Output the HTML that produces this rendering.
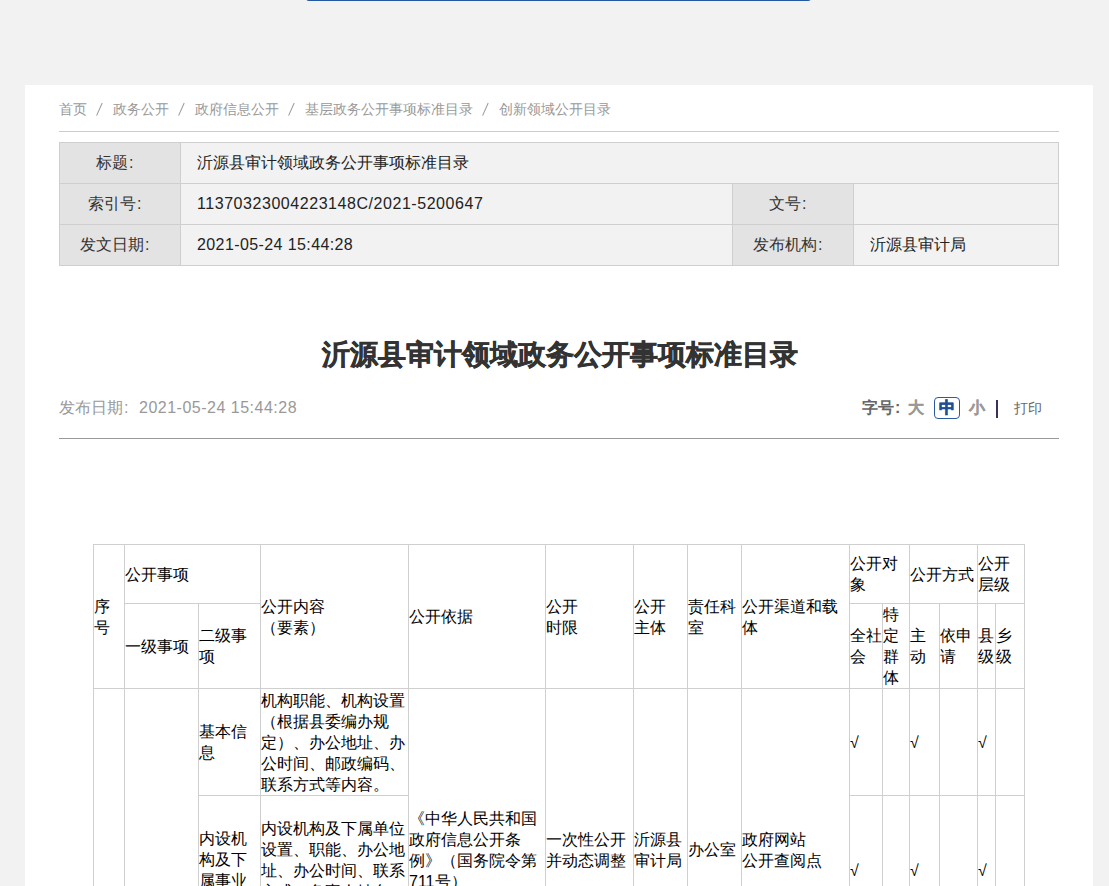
<!DOCTYPE html>
<html><head><meta charset="utf-8">
<style>
html,body{margin:0;padding:0;}
body{width:1109px;height:886px;overflow:hidden;background:#f2f2f2;position:relative;font-family:"Liberation Sans",sans-serif;}
.bar{position:absolute;left:306px;top:-3px;width:505px;height:4px;background:#2458a0;border-radius:0 0 3px 3px;}
.panel{position:absolute;left:25px;top:85px;width:1068px;height:801px;background:#fff;}
.a{position:absolute;white-space:nowrap;}
.sl{position:absolute;top:99px;}
.bc{top:99px;font-size:14px;line-height:20px;color:#999;}
.bc span.s{display:inline-block;width:26px;height:20px;vertical-align:top;}
.bcline{position:absolute;left:59px;top:131px;width:1000px;height:1px;background:#cccccc;}
.info{position:absolute;box-sizing:border-box;border:1px solid #cfcfcf;font-size:16px;color:#333;display:flex;align-items:center;}
.lab{background:#e3e3e3;justify-content:center;}
.val{background:#f2f2f2;padding-left:16px;color:#222;}
.title{left:26px;width:1068px;top:337px;text-align:center;font-size:28px;line-height:36px;font-weight:bold;color:#333;-webkit-text-stroke:0.5px #333;}
.date{left:59px;top:397px;font-size:16px;line-height:22px;color:#999;}
.dline{position:absolute;left:59px;top:438px;width:1000px;height:1px;background:#999999;}
.fs{top:397px;left:862px;font-size:16px;line-height:22px;color:#666;font-weight:bold;}
.fs2{top:397px;font-size:16px;line-height:22px;color:#999;font-weight:bold;-webkit-text-stroke:0.2px #999;}
.fbox{position:absolute;left:934px;top:397px;width:26px;height:22px;box-sizing:border-box;border:1px solid #2b5aa0;border-radius:4px;}
.fs3{left:939px;top:397px;font-size:16px;line-height:22px;color:#1d4f96;font-weight:bold;-webkit-text-stroke:0.6px #1d4f96;}
.pipe{position:absolute;left:996px;top:400px;width:1.5px;height:18px;background:#3d2f5c;}
.pr{left:1014px;top:398px;font-size:14px;line-height:20px;color:#666;}
.cl{display:inline-block;width:1em;padding-left:1px;box-sizing:border-box;text-align:left;}
.num{letter-spacing:0.5px;}
.c{position:absolute;box-sizing:border-box;border:1px solid #cfcfcf;display:flex;align-items:center;background:#fff;}
.c .t{font-size:16px;line-height:21px;color:#000;white-space:nowrap;}
</style></head><body>
<div class="bar"></div>
<div class="panel"></div>
<div class="a bc" style="left:59px">首页</div>
<div class="a bc" style="left:113px">政务公开</div>
<div class="a bc" style="left:195px">政府信息公开</div>
<div class="a bc" style="left:305px">基层政务公开事项标准目录</div>
<div class="a bc" style="left:499px">创新领域公开目录</div>
<svg class="sl" style="left:87px" width="26" height="20"><line x1="9.6" y1="16.6" x2="15.2" y2="4" stroke="#a0a0a0" stroke-width="1.1"/></svg>
<svg class="sl" style="left:169px" width="26" height="20"><line x1="9.6" y1="16.6" x2="15.2" y2="4" stroke="#a0a0a0" stroke-width="1.1"/></svg>
<svg class="sl" style="left:279px" width="26" height="20"><line x1="9.6" y1="16.6" x2="15.2" y2="4" stroke="#a0a0a0" stroke-width="1.1"/></svg>
<svg class="sl" style="left:473px" width="26" height="20"><line x1="9.6" y1="16.6" x2="15.2" y2="4" stroke="#a0a0a0" stroke-width="1.1"/></svg>
<div class="bcline"></div>
<div class="info lab" style="left:59px;top:142px;width:122px;height:42px;">标题<span class="cl">:</span></div>
<div class="info val" style="left:180px;top:142px;width:879px;height:42px;">沂源县审计领域政务公开事项标准目录</div>
<div class="info lab" style="left:59px;top:183px;width:122px;height:42px;">索引号<span class="cl">:</span></div>
<div class="info val" style="left:180px;top:183px;width:553px;height:42px;"><span style="letter-spacing:0.55px">11370323004223148C/2021-5200647</span></div>
<div class="info lab" style="left:732px;top:183px;width:122px;height:42px;">文号<span class="cl">:</span></div>
<div class="info val" style="left:853px;top:183px;width:206px;height:42px;"></div>
<div class="info lab" style="left:59px;top:224px;width:122px;height:42px;">发文日期<span class="cl">:</span></div>
<div class="info val" style="left:180px;top:224px;width:553px;height:42px;"><span style="letter-spacing:0.4px">2021-05-24 15:44:28</span></div>
<div class="info lab" style="left:732px;top:224px;width:122px;height:42px;">发布机构<span class="cl">:</span></div>
<div class="info val" style="left:853px;top:224px;width:206px;height:42px;">沂源县审计局</div>
<div class="a title">沂源县审计领域政务公开事项标准目录</div>
<div class="a date">发布日期<span class="cl">:</span><span style="letter-spacing:0.5px">2021-05-24 15:44:28</span></div>
<div class="a fs">字号<span class="cl">:</span></div>
<div class="a fs2" style="left:908px;">大</div>
<div class="fbox"></div>
<div class="a fs3">中</div>
<div class="a fs2" style="left:969px;">小</div>
<div class="pipe"></div>
<div class="a pr">打印</div>
<div class="dline"></div>
<div class="c" style="left:93px;top:544px;width:32px;height:145px;"><div class="t">序<br>号</div></div>
<div class="c" style="left:124px;top:544px;width:137px;height:60px;"><div class="t">公开事项</div></div>
<div class="c" style="left:124px;top:603px;width:75px;height:86px;"><div class="t">一级事项</div></div>
<div class="c" style="left:198px;top:603px;width:63px;height:86px;"><div class="t">二级事<br>项</div></div>
<div class="c" style="left:260px;top:544px;width:149px;height:145px;"><div class="t">公开内容<br>（要素）</div></div>
<div class="c" style="left:408px;top:544px;width:138px;height:145px;"><div class="t">公开依据</div></div>
<div class="c" style="left:545px;top:544px;width:89px;height:145px;"><div class="t">公开<br>时限</div></div>
<div class="c" style="left:633px;top:544px;width:55px;height:145px;"><div class="t">公开<br>主体</div></div>
<div class="c" style="left:687px;top:544px;width:55px;height:145px;"><div class="t">责任科<br>室</div></div>
<div class="c" style="left:741px;top:544px;width:109px;height:145px;"><div class="t">公开渠道和载<br>体</div></div>
<div class="c" style="left:849px;top:544px;width:61px;height:60px;"><div class="t">公开对<br>象</div></div>
<div class="c" style="left:909px;top:544px;width:69px;height:60px;"><div class="t">公开方式</div></div>
<div class="c" style="left:977px;top:544px;width:48px;height:60px;"><div class="t">公开<br>层级</div></div>
<div class="c" style="left:849px;top:603px;width:34px;height:86px;"><div class="t">全社<br>会</div></div>
<div class="c" style="left:882px;top:603px;width:28px;height:86px;"><div class="t">特<br>定<br>群<br>体</div></div>
<div class="c" style="left:909px;top:603px;width:31px;height:86px;"><div class="t">主<br>动</div></div>
<div class="c" style="left:939px;top:603px;width:39px;height:86px;"><div class="t">依申<br>请</div></div>
<div class="c" style="left:977px;top:603px;width:19px;height:86px;"><div class="t">县<br>级</div></div>
<div class="c" style="left:995px;top:603px;width:30px;height:86px;"><div class="t">乡<br>级</div></div>
<div class="c" style="left:93px;top:688px;width:32px;height:323px;"><div class="t"></div></div>
<div class="c" style="left:124px;top:688px;width:75px;height:323px;"><div class="t"></div></div>
<div class="c" style="left:198px;top:688px;width:63px;height:108px;"><div class="t">基本信<br>息</div></div>
<div class="c" style="left:260px;top:688px;width:149px;height:108px;"><div class="t">机构职能、机构设置<br>（根据县委编办规<br>定）、办公地址、办<br>公时间、邮政编码、<br>联系方式等内容。</div></div>
<div class="c" style="left:408px;top:688px;width:138px;height:323px;"><div class="t">《中华人民共和国<br>政府信息公开条<br>例》（国务院令第<br>711号）</div></div>
<div class="c" style="left:545px;top:688px;width:89px;height:323px;"><div class="t">一次性公开<br>并动态调整</div></div>
<div class="c" style="left:633px;top:688px;width:55px;height:323px;"><div class="t">沂源县<br>审计局</div></div>
<div class="c" style="left:687px;top:688px;width:55px;height:323px;"><div class="t">办公室</div></div>
<div class="c" style="left:741px;top:688px;width:109px;height:323px;"><div class="t">政府网站<br>公开查阅点</div></div>
<div class="c" style="left:849px;top:688px;width:34px;height:108px;"><div class="t">√</div></div>
<div class="c" style="left:882px;top:688px;width:28px;height:108px;"><div class="t"></div></div>
<div class="c" style="left:909px;top:688px;width:31px;height:108px;"><div class="t">√</div></div>
<div class="c" style="left:939px;top:688px;width:39px;height:108px;"><div class="t"></div></div>
<div class="c" style="left:977px;top:688px;width:19px;height:108px;"><div class="t">√</div></div>
<div class="c" style="left:995px;top:688px;width:30px;height:108px;"><div class="t"></div></div>
<div class="c" style="left:198px;top:795px;width:63px;height:150px;"><div class="t">内设机<br>构及下<br>属事业<br>单位</div></div>
<div class="c" style="left:260px;top:795px;width:149px;height:150px;"><div class="t">内设机构及下属单位<br>设置、职能、办公地<br>址、办公时间、联系<br>方式、负责人姓名、<br>分管领导等内容。</div></div>
<div class="c" style="left:849px;top:795px;width:34px;height:150px;"><div class="t">√</div></div>
<div class="c" style="left:882px;top:795px;width:28px;height:150px;"><div class="t"></div></div>
<div class="c" style="left:909px;top:795px;width:31px;height:150px;"><div class="t">√</div></div>
<div class="c" style="left:939px;top:795px;width:39px;height:150px;"><div class="t"></div></div>
<div class="c" style="left:977px;top:795px;width:19px;height:150px;"><div class="t">√</div></div>
<div class="c" style="left:995px;top:795px;width:30px;height:150px;"><div class="t"></div></div>
<div class="c" style="left:198px;top:944px;width:63px;height:67px;"><div class="t"></div></div>
<div class="c" style="left:260px;top:944px;width:149px;height:67px;"><div class="t"></div></div>
<div class="c" style="left:849px;top:944px;width:34px;height:67px;"><div class="t"></div></div>
<div class="c" style="left:882px;top:944px;width:28px;height:67px;"><div class="t"></div></div>
<div class="c" style="left:909px;top:944px;width:31px;height:67px;"><div class="t"></div></div>
<div class="c" style="left:939px;top:944px;width:39px;height:67px;"><div class="t"></div></div>
<div class="c" style="left:977px;top:944px;width:19px;height:67px;"><div class="t"></div></div>
<div class="c" style="left:995px;top:944px;width:30px;height:67px;"><div class="t"></div></div>
</body></html>
